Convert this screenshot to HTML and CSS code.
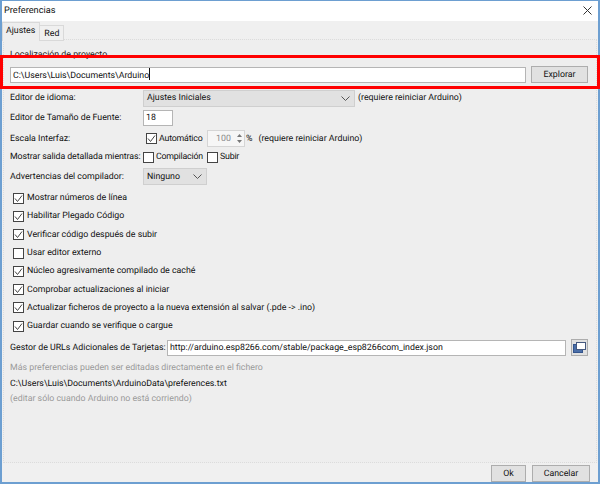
FILE: index.html
```html
<!DOCTYPE html>
<html lang="es">
<head>
<meta charset="utf-8">
<title>Preferencias</title>
<link rel="stylesheet" href="styles.css">
</head>
<body>
<div class="window">
  <header class="titlebar">
    <span>Preferencias</span>
    <svg class="close" width="9" height="9" viewBox="0 0 9 9"><path d="M.5.5l8 8M8.500.5l-8 8" stroke="#333" stroke-width="1" fill="none"/></svg>
  </header>
  <nav class="tabs">
    <span class="tab active">Ajustes</span>
    <span class="tab">Red</span>
  </nav>
  <main class="panel">
    <div class="loc-label">Localización de proyecto</div>
    <div class="row loc-row">
      <div class="input grow">C:\Users\Luis\Documents\Arduino<i class="caret"></i></div>
      <div class="btn explore">Explorar</div>
    </div>
    <div class="row r-lang">
      <span class="label">Editor de idioma:</span>
      <div class="select lang"><span>Ajustes Iniciales</span><svg class="chev" width="9" height="5" viewBox="0 0 9 5"><path d="M.5.5l4 4 4-4" stroke="#555" fill="none"/></svg></div>
      <span class="note">(requiere reiniciar Arduino)</span>
    </div>
    <div class="row r-size">
      <span class="label">Editor de Tamaño de Fuente:</span>
      <div class="input size">18</div>
    </div>
    <div class="row r-scale">
      <span class="label">Escala Interfaz:</span>
      <label class="check auto"><svg class="box" width="11" height="11" viewBox="0 0 11 11"><rect x=".5" y=".5" width="10" height="10" fill="#fff" stroke="#444"/><path d="M2 5.500l2.500 3 4.500-6" stroke="#444" fill="none"/></svg>Automático</label>
      <div class="spinner"><span class="val">100</span><span class="arrows"><svg width="7" height="11" viewBox="0 0 7 11"><path d="M3.500 1l2.500 3h-5zM3.500 10l2.500-3h-5z" fill="#777"/></svg></span></div>
      <span class="pct">%</span>
      <span class="note n2">(requiere reiniciar Arduino)</span>
    </div>
    <div class="row r-verbose">
      <span class="label tight">Mostrar salida detallada mientras:</span>
      <label class="check c1"><svg class="box" width="11" height="11" viewBox="0 0 11 11"><rect x=".5" y=".5" width="10" height="10" fill="#fff" stroke="#444"/></svg>Compilación</label>
      <label class="check c2"><svg class="box" width="11" height="11" viewBox="0 0 11 11"><rect x=".5" y=".5" width="10" height="10" fill="#fff" stroke="#444"/></svg>Subir</label>
    </div>
    <div class="row r-warn">
      <span class="label">Advertencias del compilador:</span>
      <div class="select warn"><span>Ninguno</span><svg class="chev" width="9" height="5" viewBox="0 0 9 5"><path d="M.5.5l4 4 4-4" stroke="#555" fill="none"/></svg></div>
    </div>
    <ul class="checks">
      <li class="check"><svg class="box" width="11" height="11" viewBox="0 0 11 11"><rect x=".5" y=".5" width="10" height="10" fill="#fff" stroke="#444"/><path d="M2 5.500l2.500 3 4.500-6" stroke="#444" fill="none"/></svg>Mostrar números de línea</li>
      <li class="check"><svg class="box" width="11" height="11" viewBox="0 0 11 11"><rect x=".5" y=".5" width="10" height="10" fill="#fff" stroke="#444"/><path d="M2 5.500l2.500 3 4.500-6" stroke="#444" fill="none"/></svg>Habilitar Plegado Código</li>
      <li class="check"><svg class="box" width="11" height="11" viewBox="0 0 11 11"><rect x=".5" y=".5" width="10" height="10" fill="#fff" stroke="#444"/><path d="M2 5.500l2.500 3 4.500-6" stroke="#444" fill="none"/></svg>Verificar código después de subir</li>
      <li class="check"><svg class="box" width="11" height="11" viewBox="0 0 11 11"><rect x=".5" y=".5" width="10" height="10" fill="#fff" stroke="#444"/></svg>Usar editor externo</li>
      <li class="check"><svg class="box" width="11" height="11" viewBox="0 0 11 11"><rect x=".5" y=".5" width="10" height="10" fill="#fff" stroke="#444"/><path d="M2 5.500l2.500 3 4.500-6" stroke="#444" fill="none"/></svg>Núcleo agresivamente compilado de caché</li>
      <li class="check"><svg class="box" width="11" height="11" viewBox="0 0 11 11"><rect x=".5" y=".5" width="10" height="10" fill="#fff" stroke="#444"/><path d="M2 5.500l2.500 3 4.500-6" stroke="#444" fill="none"/></svg>Comprobar actualizaciones al iniciar</li>
      <li class="check"><svg class="box" width="11" height="11" viewBox="0 0 11 11"><rect x=".5" y=".5" width="10" height="10" fill="#fff" stroke="#444"/><path d="M2 5.500l2.500 3 4.500-6" stroke="#444" fill="none"/></svg>Actualizar ficheros de proyecto a la nueva extensión al salvar (.pde -&gt; .ino)</li>
      <li class="check"><svg class="box" width="11" height="11" viewBox="0 0 11 11"><rect x=".5" y=".5" width="10" height="10" fill="#fff" stroke="#444"/><path d="M2 5.500l2.500 3 4.500-6" stroke="#444" fill="none"/></svg>Guardar cuando se verifique o cargue</li>
    </ul>
    <div class="row r-url">
      <span class="url-label">Gestor de URLs Adicionales de Tarjetas:</span>
      <div class="input grow">http://arduino.esp8266.com/stable/package_esp8266com_index.json</div>
      <div class="btn icon"><svg width="13" height="11" viewBox="0 0 13 11"><rect x=".5" y="2.500" width="9" height="8" fill="#4a6ea8" stroke="#34548c"/><rect x="3.500" y=".5" width="9" height="7" fill="#fff" stroke="#46597f"/></svg></div>
    </div>
    <p class="hint h1">Más preferencias pueden ser editadas directamente en el fichero</p>
    <p class="path">C:\Users\Luis\Documents\ArduinoData\preferences.txt</p>
    <p class="hint h2">(editar sólo cuando Arduino no está corriendo)</p>
  </main>
  <footer class="footer">
    <div class="btn ok">Ok</div>
    <div class="btn cancel">Cancelar</div>
  </footer>
</div>
<div class="highlight"></div>
</body>
</html>
```

FILE: styles.css
```css
* { box-sizing: border-box; }
html, body { margin: 0; padding: 0; }
body {
  width: 600px;
  height: 484px;
  overflow: hidden;
  position: relative;
  font: 8.800px/12px Roboto, "Liberation Sans", sans-serif;
  text-rendering: geometricPrecision;
  color: #111;
  background: #f0f0f0;
  white-space: nowrap;
}
.window {
  height: 484px;
  display: flex;
  flex-direction: column;
  border: 1px solid #6d9fd1;
  border-width: 1px 2px 2px 2px;
}
.titlebar {
  height: 20px;
  flex: none;
  background: #fff;
  display: flex;
  align-items: center;
  justify-content: space-between;
  padding: 0 6px 0 2px;
  font-size: 9.200px;
}
.close { margin-bottom: 1px; }
.tabs {
  flex: none;
  height: 18px;
  display: flex;
  align-items: flex-start;
  position: relative;
  z-index: 1;
}
.tab {
  height: 16px;
  margin-top: 4px;
  padding: 2px 4px 0 4px;
  background: #f0f0f0;
  border: 1px solid #d9d9d9;
  border-left: 0;
}
.tab.active {
  height: 19px;
  margin-top: 1px;
  padding: 2px 4px 0 3px;
  background: #eee;
  border-bottom: 0;
  border-left: 1px solid #d9d9d9;
}
.panel {
  height: 424px;
  flex: none;
  margin: 0 1px;
  padding: 9px 8px 0 6px;
  background: #eee;
  border: 1px dotted #dcdcdc;
}
.row { display: flex; align-items: center; }
.loc-label { height: 12px; color: #222; }
.loc-row { height: 17px; margin-top: 5px; }
.grow { flex: 1; }
.input {
  height: 16px;
  background: #fff;
  border: 1px solid #b5b5b5;
  padding-left: 2px;
  line-height: 14px;
}
.caret {
  display: inline-block;
  width: 1px;
  height: 12px;
  background: #111;
  vertical-align: -2px;
}
.btn {
  height: 17px;
  display: flex;
  align-items: center;
  justify-content: center;
  background: #e1e1e1;
  border: 1px solid #adadad;
  flex: none;
}
.explore { width: 57px; margin-left: 5px; }
.r-lang { height: 18px; margin-top: 6px; }
.label { width: 133px; flex: none; }
.tight { letter-spacing: -0.08px; }
.select {
  height: 17px;
  display: flex;
  align-items: center;
  justify-content: space-between;
  padding: 0 4px 0 3px;
  background: #e1e1e1;
  border: 1px solid #cfcfcf;
  flex: none;
}
.lang { width: 212px; }
.warn { width: 64px; }
.note { margin-left: 3px; }
.r-size { height: 17px; margin-top: 2px; }
.size { width: 30px; height: 16px; }
.r-scale { height: 17px; margin-top: 4px; }
.check { display: flex; align-items: center; }
.box { flex: none; margin-right: 3px; }
.auto { width: 61px; margin-left: 3px; letter-spacing: -0.2px; }
.auto .box, .c1 .box, .c2 .box { margin-right: 2px; }
.spinner {
  width: 38px;
  height: 17px;
  display: flex;
  justify-content: space-between;
  align-items: center;
  background: #f6f6f6;
  border: 1px solid #d5d5d5;
  color: #8a8a8a;
  padding-left: 8px;
}
.arrows { display: flex; padding-right: 1px; }
.pct { margin-left: 1px; }
.n2 { margin-left: 6px; }
.r-verbose { height: 16px; margin-top: 2px; }
.c1 { width: 64px; letter-spacing: -0.2px; }
.c2 { letter-spacing: -0.2px; }
.r-warn { height: 17px; margin-top: 3px; }
.checks {
  list-style: none;
  margin: 4px 0 0 3px;
  padding: 0;
  display: grid;
  grid-auto-rows: 18.300px;
}
.r-url { height: 18px; margin-top: 3.600px; }
.url-label { flex: none; width: 157px; }
.icon { width: 17px; height: 17px; margin-left: 5px; }
.hint, .path { margin: 0; }
.hint { color: #9a9a9a; }
.h1 { margin-top: 5px; }
.path { margin-top: 4px; }
.h2 { margin-top: 3px; }
.footer {
  flex: 1;
  display: flex;
  justify-content: flex-end;
  align-items: flex-start;
  gap: 6px;
  padding: 2px 8px 0 0;
  background: #f0f0f0;
}
.ok { width: 35px; }
.cancel { width: 58px; }
.highlight {
  position: absolute;
  left: 0;
  top: 55px;
  width: 600px;
  height: 34px;
  border: 3px solid #f00;
  pointer-events: none;
}
```
